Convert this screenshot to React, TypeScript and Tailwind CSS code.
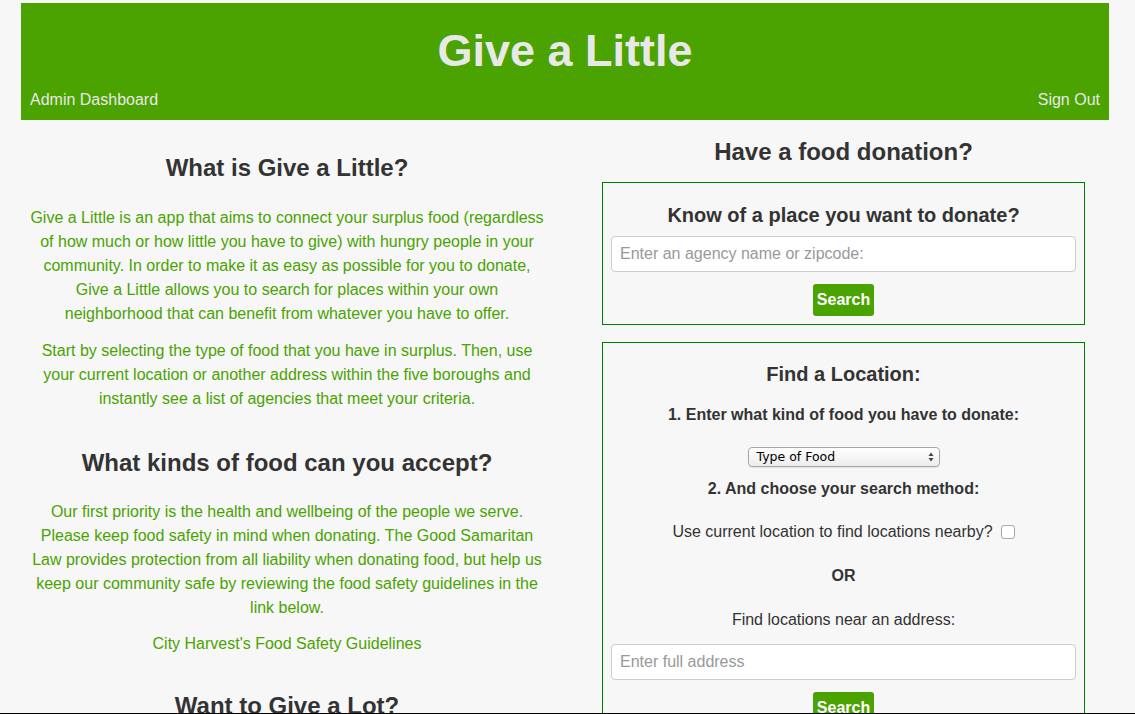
import React from "react";

const GREEN = "bg-[#4aa300]";

function SearchButton({ className = "" }: { className?: string }) {
  return (
    <button
      className={`${GREEN} text-white font-bold text-[16px] leading-[32px] h-[32px] px-[4px] rounded-[3px] ${className}`}
    >
      Search
    </button>
  );
}

export default function App() {
  return (
    <div
      className="min-h-screen bg-[#f7f7f7] text-[#333] pt-[3px]"
      style={{ fontFamily: '"Liberation Sans", Arial, Helvetica, sans-serif' }}
    >
      <header className={`ml-[21px] w-[1088px] ${GREEN} pt-[22px] pb-[8px]`}>
        <h1 className="text-center font-bold text-[45px] leading-[52px] text-[#e8e8e8]">
          Give a Little
        </h1>
        <nav className="mt-[11px] flex justify-between px-[9px] text-[16px] leading-[24px] text-[#e8e8e8]">
          <a href="#">Admin Dashboard</a>
          <a href="#">Sign Out</a>
        </nav>
      </header>

      <main className="ml-[21px] w-[1088px] flex items-start">
        <section className="w-[532px] text-center px-[4px]">
          <h3 className="mt-[34px] font-bold text-[24px] leading-[28px]">What is Give a Little?</h3>
          <p className="mt-[24px] text-[16px] leading-[24px] text-[#4aa300]">
            Give a Little is an app that aims to connect your surplus food (regardless of how much or how
            little you have to give) with hungry people in your community. In order to make it as easy as
            possible for you to donate, Give a Little allows you to search for places within your own
            neighborhood that can benefit from whatever you have to offer.
          </p>
          <p className="mt-[13px] text-[16px] leading-[24px] text-[#4aa300]">
            Start by selecting the type of food that you have in surplus. Then, use your current location
            or another address within the five boroughs and instantly see a list of agencies that meet your
            criteria.
          </p>
          <h3 className="mt-[38px] font-bold text-[24px] leading-[28px]">What kinds of food can you accept?</h3>
          <p className="mt-[23px] text-[16px] leading-[24px] text-[#4aa300]">
            Our first priority is the health and wellbeing of the people we serve. Please keep food safety in
            mind when donating. The Good Samaritan Law provides protection from all liability when donating
            food, but help us keep our community safe by reviewing the food safety guidelines in the link
            below.
          </p>
          <p className="mt-[12px] text-[16px] leading-[24px] text-[#4aa300]">
            <a href="#">City Harvest's Food Safety Guidelines</a>
          </p>
          <h3 className="mt-[36px] font-bold text-[24px] leading-[28px]">Want to Give a Lot?</h3>
        </section>

        <section className="ml-[49px] w-[483px] text-center">
          <h3 className="mt-[18px] font-bold text-[24px] leading-[28px]">Have a food donation?</h3>

          <div className="mt-[16px] border border-[#008000] px-[8px] pt-[20px] pb-[8px]">
            <h4 className="font-bold text-[20px] leading-[24px]">Know of a place you want to donate?</h4>
            <input
              className="mt-[9px] block w-full h-[36px] bg-white border border-[#ccc] rounded-[4px] px-[8px] text-[16px] placeholder:text-[#999] outline-none"
              placeholder="Enter an agency name or zipcode:"
            />
            <SearchButton className="mt-[12px]" />
          </div>

          <div className="mt-[17px] border border-[#008000] px-[8px] pt-[19px] pb-[20px]">
            <h4 className="font-bold text-[20px] leading-[24px]">Find a Location:</h4>
            <p className="mt-[17px] font-bold text-[16px] leading-[24px]">
              1. Enter what kind of food you have to donate:
            </p>
            <div className="mt-[20px] mx-auto w-[192px] h-[20px] relative rounded-[4px] border border-[#a6a6a6] bg-gradient-to-b from-white to-[#ececec] text-left shadow-[0_1px_1px_rgba(0,0,0,0.08)]">
              <span
                className="absolute left-[8px] top-0 leading-[18px] text-black"
                style={{ fontFamily: '"DejaVu Sans", "Liberation Sans", sans-serif', fontSize: "12.5px" }}
              >
                Type of Food
              </span>
              <svg className="absolute right-[5px] top-[4px]" width="6" height="10" viewBox="0 0 6 10">
                <path d="M3 0.5 L5.5 4 H0.5 Z" fill="#444" />
                <path d="M3 9.5 L5.5 6 H0.5 Z" fill="#444" />
              </svg>
            </div>
            <p className="mt-[10px] font-bold text-[16px] leading-[24px]">2. And choose your search method:</p>
            <p className="mt-[19px] text-[16px] leading-[24px] flex items-center justify-center">
              <span>Use current location to find locations nearby?</span>
              <span className="ml-[8px] inline-block w-[14px] h-[14px] rounded-[3px] border border-[#a8a8a8] bg-white" />
            </p>
            <p className="mt-[20px] font-bold text-[16px] leading-[24px]">OR</p>
            <p className="mt-[20px] text-[16px] leading-[24px]">Find locations near an address:</p>
            <input
              className="mt-[12px] block w-full h-[36px] bg-white border border-[#ccc] rounded-[4px] px-[8px] text-[16px] placeholder:text-[#999] outline-none"
              placeholder="Enter full address"
            />
            <SearchButton className="mt-[12px]" />
          </div>
        </section>
      </main>

      <div className="fixed left-0 bottom-0 w-full h-px bg-black" />
    </div>
  );
}
